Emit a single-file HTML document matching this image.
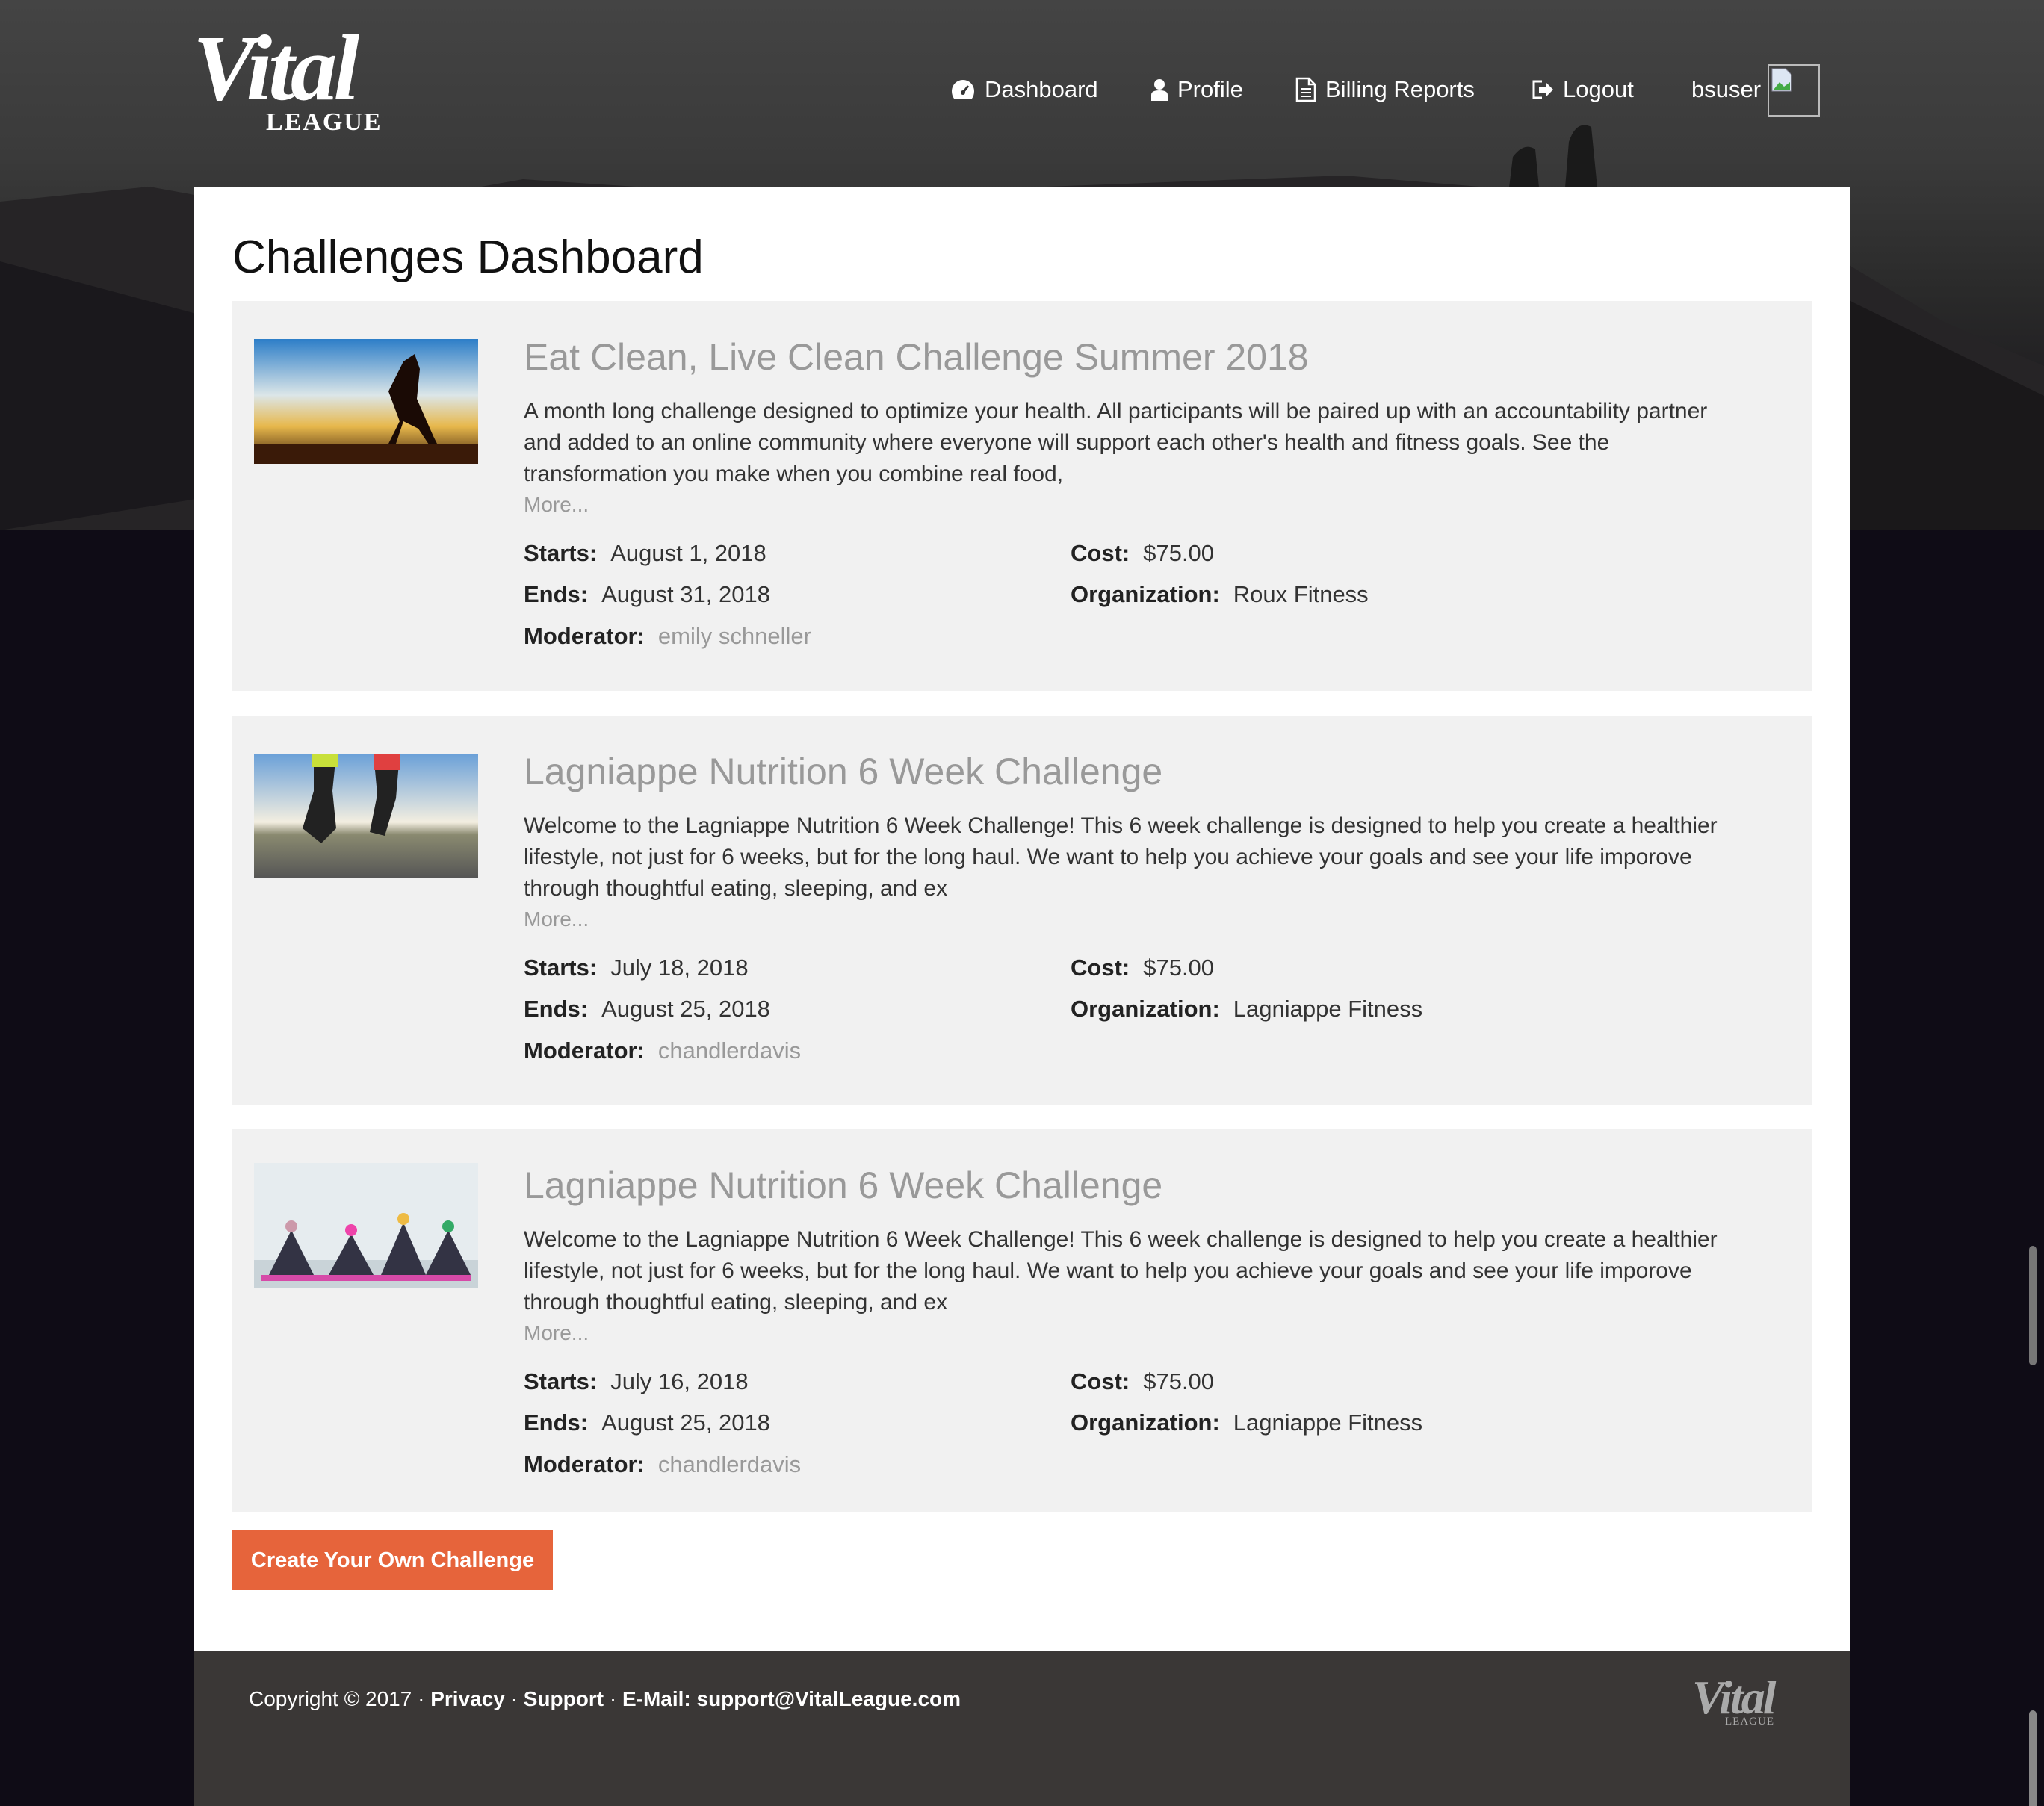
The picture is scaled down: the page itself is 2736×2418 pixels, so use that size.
<!DOCTYPE html>
<html><head><meta charset="utf-8">
<style>
*{margin:0;padding:0;box-sizing:border-box}
html,body{width:2736px;height:2418px;overflow:hidden}
body{font-family:"Liberation Sans",sans-serif;background:#0f0c16;position:relative}
.bg{position:absolute;left:0;top:0;width:2736px;height:710px;background:linear-gradient(180deg,#444 0%,#3a3a3a 30%,#2a2a2a 55%,#1c1a1e 80%,#0f0c16 100%)}
.mtn{position:absolute;left:0;top:230px;width:2736px;height:480px}
.logo{position:absolute;left:258px;top:30px;color:#fff}
.logo .v{font-family:"Liberation Serif",serif;font-style:italic;font-weight:bold;font-size:125px;line-height:125px;letter-spacing:-5px}
.logo .l{position:absolute;left:98px;top:115px;font-family:"Liberation Serif",serif;font-size:34px;letter-spacing:2px;font-weight:bold}
.nav{position:absolute;top:98px;color:#fff;font-size:31px;display:flex;align-items:center;height:44px}
.nav svg{margin-right:12px}
.avatar{position:absolute;left:2366px;top:86px;width:70px;height:70px;border:2px solid #bbb}
.main{position:absolute;left:260px;top:251px;width:2216px;height:1960px;background:#fff}
h1{position:absolute;left:51px;top:58px;font-size:62px;font-weight:normal;color:#111}
.card{position:absolute;left:51px;width:2114px;background:#f1f1f1}
.card .img{position:absolute;left:29px;top:51px;width:300px;height:167px;overflow:hidden}
.t{position:absolute;left:390px;font-size:50px;color:#999;white-space:nowrap}
.d{position:absolute;left:390px;width:1630px;font-size:30px;line-height:42px;color:#333}
.more{position:absolute;left:390px;font-size:28px;color:#999}
.m{position:absolute;font-size:31px;color:#333;white-space:nowrap}
.m b{color:#222;margin-right:18px}
.gr{color:#999}
.btn{position:absolute;left:51px;top:1798px;width:429px;height:80px;background:#e6643b;color:#fff;font-weight:bold;font-size:29px;line-height:80px;text-align:center}
.foot{position:absolute;left:260px;top:2211px;width:2216px;height:207px;background:#3a3736}
.foot .tx{position:absolute;left:73px;top:48px;color:#fff;font-size:28px}
.foot .tx b{font-weight:bold}
.fl{position:absolute;left:2005px;top:30px;color:#aaa}
.scroll{position:absolute;left:2716px;top:1668px;width:10px;height:160px;background:#777;border-radius:5px}
.scroll2{position:absolute;left:2716px;top:2290px;width:10px;height:140px;background:#888;border-radius:5px}
</style></head><body>
<div class="bg"></div>
<svg class="mtn" viewBox="0 0 2736 480" preserveAspectRatio="none"><path d="M0 40 L200 20 L420 60 L700 10 L1000 30 L1400 20 L1800 5 L2100 30 L2400 80 L2600 200 L2736 260 L2736 480 L0 480Z" fill="#262426"/><path d="M0 120 L300 200 L500 400 L0 480Z" fill="#1a181c"/><path d="M2450 160 L2736 300 L2736 480 L2450 480Z" fill="#1a181a"/></svg>
<svg style="position:absolute;left:2000px;top:150px" width="180" height="101" viewBox="0 0 180 101"><path d="M20 101 L25 60 Q40 40 55 50 L60 101Z M95 101 L100 40 Q110 10 130 20 L138 101Z" fill="#1a1a1a"/></svg>
<div class="logo"><div class="v">Vital</div><div class="l">LEAGUE</div></div>
<div class="nav" style="left:1272px"><svg width="34" height="30" viewBox="0 0 34 30"><path d="M17 2A15 15 0 0 0 2 17q0 6 3 10h24q3-4 3-10A15 15 0 0 0 17 2z" fill="#fff"/><circle cx="17" cy="19" r="3" fill="#333"/><path d="M17 19l7-9" stroke="#333" stroke-width="3"/></svg>Dashboard</div>
<div class="nav" style="left:1540px"><svg width="24" height="30" viewBox="0 0 24 30"><circle cx="12" cy="8" r="7" fill="#fff"/><path d="M1 30v-8q0-6 11-6t11 6v8z" fill="#fff"/></svg>Profile</div>
<div class="nav" style="left:1734px"><svg width="28" height="34" viewBox="0 0 28 34"><path d="M2 2h16l8 8v22H2z M18 2v8h8" fill="none" stroke="#fff" stroke-width="2.5"/><path d="M7 16h14M7 21h14M7 26h14" stroke="#fff" stroke-width="2"/></svg>Billing Reports</div>
<div class="nav" style="left:2050px"><svg width="30" height="28" viewBox="0 0 30 28"><path d="M14 3H3v22h11" fill="none" stroke="#fff" stroke-width="3"/><path d="M10 10h9V4l10 10-10 10v-6h-9z" fill="#fff"/></svg>Logout</div>
<div class="nav" style="left:2264px">bsuser</div>
<div class="avatar"><svg width="30" height="34" viewBox="0 0 30 34" style="margin:2px"><path d="M2 2h18l8 8v22H2z" fill="#dde6f3" stroke="#889"/><path d="M4 30l8-10 6 6 8-6v10z" fill="#4a4"/></svg></div>

<div class="main">
<h1>Challenges Dashboard</h1>

<div class="card" style="top:152px;height:522px">
<div class="img"><svg width="300" height="167"><defs><linearGradient id="g1" x1="0" y1="0" x2="0" y2="1"><stop offset="0" stop-color="#2d7ec8"/><stop offset=".45" stop-color="#dce6e8"/><stop offset=".7" stop-color="#e7b84c"/><stop offset="1" stop-color="#3a1a08"/></linearGradient></defs><rect width="300" height="167" fill="url(#g1)"/><path d="M175 150 L195 110 L180 70 L200 30 L215 20 L222 40 L218 80 L240 130 L250 150 L240 150 L220 120 L200 110 L185 155Z" fill="#1a0a05"/><rect y="140" width="300" height="27" fill="#3a1a08"/></svg></div>
<div class="t" style="top:46px">Eat Clean, Live Clean Challenge Summer 2018</div>
<div class="d" style="top:127px">A month long challenge designed to optimize your health. All participants will be paired up with an accountability partner and added to an online community where everyone will support each other's health and fitness goals. See the transformation you make when you combine real food,</div>
<div class="more" style="top:257px">More...</div>
<div class="m" style="left:390px;top:320px"><b>Starts:</b>August 1, 2018</div>
<div class="m" style="left:390px;top:375px"><b>Ends:</b>August 31, 2018</div>
<div class="m" style="left:390px;top:431px"><b>Moderator:</b><span class="gr">emily schneller</span></div>
<div class="m" style="left:1122px;top:320px"><b>Cost:</b>$75.00</div>
<div class="m" style="left:1122px;top:375px"><b>Organization:</b>Roux Fitness</div>
</div>

<div class="card" style="top:707px;height:522px">
<div class="img"><svg width="300" height="167"><defs><linearGradient id="g2" x1="0" y1="0" x2="0" y2="1"><stop offset="0" stop-color="#6aa0d8"/><stop offset=".55" stop-color="#f3eee0"/><stop offset=".65" stop-color="#8a8a70"/><stop offset="1" stop-color="#555"/></linearGradient></defs><rect width="300" height="167" fill="url(#g2)"/><path d="M80 0h30l-5 50 5 50 -20 20 -25-20 15-50z" fill="#222"/><rect x="78" y="0" width="34" height="18" fill="#c8e03a"/><path d="M160 0h35l-5 60 -15 50 -20 -5 10-50z" fill="#222"/><rect x="160" y="0" width="36" height="22" fill="#e04040"/></svg></div>
<div class="t" style="top:46px">Lagniappe Nutrition 6 Week Challenge</div>
<div class="d" style="top:127px">Welcome to the Lagniappe Nutrition 6 Week Challenge! This 6 week challenge is designed to help you create a healthier lifestyle, not just for 6 weeks, but for the long haul. We want to help you achieve your goals and see your life imporove through thoughtful eating, sleeping, and ex</div>
<div class="more" style="top:257px">More...</div>
<div class="m" style="left:390px;top:320px"><b>Starts:</b>July 18, 2018</div>
<div class="m" style="left:390px;top:375px"><b>Ends:</b>August 25, 2018</div>
<div class="m" style="left:390px;top:431px"><b>Moderator:</b><span class="gr">chandlerdavis</span></div>
<div class="m" style="left:1122px;top:320px"><b>Cost:</b>$75.00</div>
<div class="m" style="left:1122px;top:375px"><b>Organization:</b>Lagniappe Fitness</div>
</div>

<div class="card" style="top:1261px;height:513px">
<div class="img" style="top:45px"><svg width="300" height="167"><rect width="300" height="167" fill="#e6ecef"/><rect y="130" width="300" height="37" fill="#c9d3d8"/><rect x="10" y="150" width="280" height="8" fill="#d64aa8"/><path d="M20 150 L50 90 L80 150Z M100 150 L130 95 L160 150Z M170 150 L200 80 L230 150Z M230 150 L260 90 L290 150Z" fill="#334"/><circle cx="50" cy="85" r="8" fill="#c9a"/><circle cx="130" cy="90" r="8" fill="#e4a"/><circle cx="200" cy="75" r="8" fill="#eb4"/><circle cx="260" cy="85" r="8" fill="#3a6"/></svg></div>
<div class="t" style="top:46px">Lagniappe Nutrition 6 Week Challenge</div>
<div class="d" style="top:127px">Welcome to the Lagniappe Nutrition 6 Week Challenge! This 6 week challenge is designed to help you create a healthier lifestyle, not just for 6 weeks, but for the long haul. We want to help you achieve your goals and see your life imporove through thoughtful eating, sleeping, and ex</div>
<div class="more" style="top:257px">More...</div>
<div class="m" style="left:390px;top:320px"><b>Starts:</b>July 16, 2018</div>
<div class="m" style="left:390px;top:375px"><b>Ends:</b>August 25, 2018</div>
<div class="m" style="left:390px;top:431px"><b>Moderator:</b><span class="gr">chandlerdavis</span></div>
<div class="m" style="left:1122px;top:320px"><b>Cost:</b>$75.00</div>
<div class="m" style="left:1122px;top:375px"><b>Organization:</b>Lagniappe Fitness</div>
</div>

<div class="btn">Create Your Own Challenge</div>
</div>

<div class="foot">
<div class="tx">Copyright © 2017 · <b>Privacy</b> · <b>Support</b> · <b>E-Mail: support@VitalLeague.com</b></div>
<div class="fl"><div style="font-family:'Liberation Serif',serif;font-style:italic;font-weight:bold;font-size:64px;line-height:64px;letter-spacing:-3px">Vital</div><div style="position:absolute;left:44px;top:56px;font-family:'Liberation Serif',serif;font-size:15px;letter-spacing:1px">LEAGUE</div></div>
</div>
<div class="scroll"></div>
<div class="scroll2"></div>
</body></html>
